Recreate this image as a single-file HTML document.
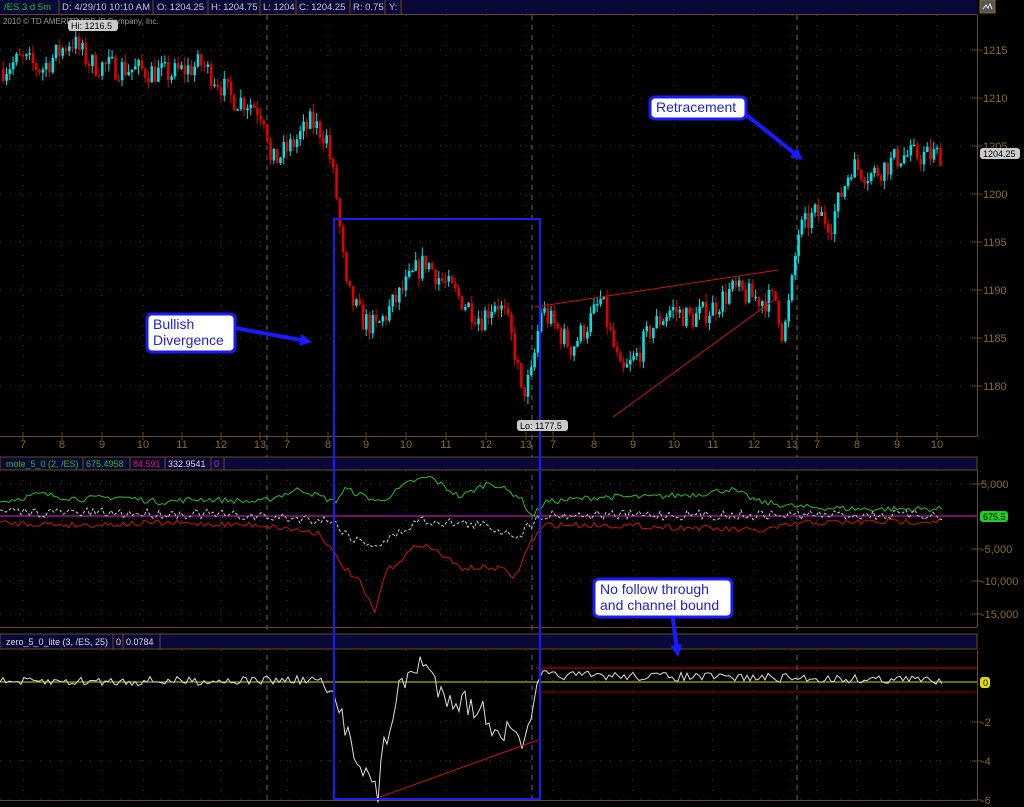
<!DOCTYPE html>
<html><head><meta charset="utf-8"><style>
html,body{margin:0;padding:0;background:#000;width:1024px;height:807px;overflow:hidden;font-family:"Liberation Sans",sans-serif}
svg{display:block}
</style></head><body>
<svg id="s" width="1024" height="807" xmlns="http://www.w3.org/2000/svg" font-family="Liberation Sans, sans-serif">
<rect width="1024" height="807" fill="#000"/>
<rect x="0" y="0" width="977" height="14" fill="#0a0838"/>
<line x1="0" y1="14.5" x2="977" y2="14.5" stroke="#6b4a1a"/>
<g font-size="9.5" fill="#c8c8c8">
<text x="4" y="10" fill="#20c020">/ES 3 d 5m</text>
<line x1="59" y1="0" x2="59" y2="14" stroke="#6b4a1a"/>
<text x="62" y="10" textLength="88">D: 4/29/10 10:10 AM</text>
<line x1="153" y1="0" x2="153" y2="14" stroke="#6b4a1a"/>
<text x="157" y="10">O: 1204.25</text>
<line x1="208" y1="0" x2="208" y2="14" stroke="#6b4a1a"/>
<text x="211" y="10">H: 1204.75</text>
<line x1="260" y1="0" x2="260" y2="14" stroke="#6b4a1a"/>
<text x="263" y="10">L: 1204</text>
<line x1="296" y1="0" x2="296" y2="14" stroke="#6b4a1a"/>
<text x="299" y="10">C: 1204.25</text>
<line x1="350" y1="0" x2="350" y2="14" stroke="#6b4a1a"/>
<text x="353" y="10">R: 0.75</text>
<line x1="385" y1="0" x2="385" y2="14" stroke="#6b4a1a"/>
<text x="389" y="10">Y:</text>
<line x1="401" y1="0" x2="401" y2="14" stroke="#6b4a1a"/>
</g>
<rect x="980" y="0" width="15" height="13" fill="#555" stroke="#8a6a30"/>
<path d="M983 9 L986 5 L988 8 L990 4 L992 9" stroke="#eee" fill="none"/>
<text x="3" y="24" font-size="8" fill="#999">2010 © TD AMERITRADE IP Company, Inc.</text>
<g id="grid"></g>
<g id="draw"></g>
</svg>
<script>
var NS="http://www.w3.org/2000/svg",g=document.getElementById('draw'),gr=document.getElementById('grid');
function el(p,tag,a,t){var e=document.createElementNS(NS,tag);for(var k in a)e.setAttribute(k,a[k]);if(t!=null)e.textContent=t;p.appendChild(e);return e}
var BR="#6b4a1a",TX="#8a6a30";
el(gr,'line',{x1:977.5,y1:15,x2:977.5,y2:436,stroke:BR});
el(gr,'line',{x1:0,y1:436.5,x2:977,y2:436.5,stroke:BR});
var py=function(p){return 50+(1215-p)*9.6};
[1215,1210,1205,1200,1195,1190,1185,1180].forEach(function(p){var y=py(p);
el(gr,'line',{x1:0,y1:y,x2:977,y2:y,stroke:"#5a3e14","stroke-dasharray":"1,9"});
el(gr,'line',{x1:972,y1:y,x2:982,y2:y,stroke:BR});
el(gr,'text',{x:983,y:y+4,"font-size":11,fill:TX},p)});
var xs=[[23,7],[62,8],[102,9],[143,10],[182,11],[221,12],[260,13],[287,7],[328,8],[366,9],[406,10],[446,11],[486,12],[526,13],[553,7],[594,8],[633,9],[674,10],[713,11],[754,12],[792,13],[817,7],[857,8],[897,9],[937,10]];
xs.forEach(function(a){el(gr,'line',{x1:a[0],y1:15,x2:a[0],y2:436,stroke:"#5a3e14","stroke-dasharray":"1,9"});
el(gr,'line',{x1:a[0],y1:432,x2:a[0],y2:440,stroke:BR});
el(gr,'text',{x:a[0],y:448,"font-size":11,fill:TX,"text-anchor":"middle"},a[1]);
[[470,627],[650,800]].forEach(function(r){el(gr,'line',{x1:a[0],y1:r[0],x2:a[0],y2:r[1],stroke:"#5a3e14","stroke-dasharray":"1,9"})})});
[267,532,797].forEach(function(x){el(gr,'line',{x1:x,y1:15,x2:x,y2:800,stroke:"#666","stroke-dasharray":"5,5"})});
el(gr,'rect',{x:0,y:457,width:977,height:13,fill:"#0a0838",stroke:BR});
el(gr,'text',{x:6,y:467,"font-size":9,fill:"#20c020"},"mole_5_0 (2, /ES)");
el(gr,'line',{x1:83,y1:457,x2:83,y2:470,stroke:BR});
el(gr,'text',{x:86,y:467,"font-size":9,fill:"#20c020"},"675.4958");
el(gr,'line',{x1:130,y1:457,x2:130,y2:470,stroke:BR});
el(gr,'text',{x:133,y:467,"font-size":9,fill:"#e02020"},"84.591");
el(gr,'line',{x1:165,y1:457,x2:165,y2:470,stroke:BR});
el(gr,'text',{x:168,y:467,"font-size":9,fill:"#ddd"},"332.9541");
el(gr,'line',{x1:211,y1:457,x2:211,y2:470,stroke:BR});
el(gr,'text',{x:214,y:467,"font-size":9,fill:"#e020e0"},"0");
el(gr,'line',{x1:224,y1:457,x2:224,y2:470,stroke:BR});
el(gr,'rect',{x:0,y:634,width:977,height:15,fill:"#0a0838",stroke:BR});
el(gr,'text',{x:6,y:645,"font-size":9,fill:"#ddd"},"zero_5_0_lite (3, /ES, 25)");
el(gr,'line',{x1:113,y1:634,x2:113,y2:649,stroke:BR});
el(gr,'text',{x:116,y:645,"font-size":9,fill:"#ddd"},"0");
el(gr,'line',{x1:123,y1:634,x2:123,y2:649,stroke:BR});
el(gr,'text',{x:126,y:645,"font-size":9,fill:"#ddd"},"0.0784");
el(gr,'line',{x1:160,y1:634,x2:160,y2:649,stroke:BR});
el(gr,'line',{x1:977.5,y1:470,x2:977.5,y2:627,stroke:BR});
el(gr,'line',{x1:0,y1:627.5,x2:977,y2:627.5,stroke:BR});
el(gr,'line',{x1:977.5,y1:650,x2:977.5,y2:800,stroke:BR});
el(gr,'line',{x1:0,y1:800.5,x2:977,y2:800.5,stroke:BR});
[[484,"5,000"],[549,"-5,000"],[581,"-10,000"],[614,"-15,000"],[722,"-2"],[761,"-4"],[800,"-6"]].forEach(function(a){
el(gr,'line',{x1:0,y1:a[0],x2:977,y2:a[0],stroke:"#5a3e14","stroke-dasharray":"1,9"});
el(gr,'line',{x1:972,y1:a[0],x2:982,y2:a[0],stroke:BR});
el(gr,'text',{x:981,y:a[0]+4,"font-size":11,fill:TX},a[1])});
var seed=7;function rnd(){seed=(seed*16807)%2147483647;return seed/2147483647}
function interp(k,x){for(var i=0;i<k.length-1;i++){if(x<=k[i+1][0]){var t=(x-k[i][0])/(k[i+1][0]-k[i][0]);return k[i][1]+t*(k[i+1][1]-k[i][1])}}return k[k.length-1][1]}
var K=[[0,1213],[20,1214],[40,1213],[60,1215],[70,1216],[90,1213.5],[130,1213],[170,1212.5],[200,1213.5],[215,1212],[230,1210],[250,1209.5],[265,1208],[268,1203],[290,1205],[310,1207.5],[325,1206],[335,1200],[345,1190],[360,1187],[375,1186],[395,1189],[415,1192],[425,1193],[440,1191],[460,1189],[480,1187],[495,1189],[505,1187],[515,1183],[520,1179],[530,1181],[540,1188],[555,1186],[570,1184],[590,1187],[600,1189],[610,1185],[620,1181],[635,1183],[650,1186],[670,1188],[690,1187],[710,1188],[730,1190],[760,1189],[775,1189],[782,1185],[790,1190],[797,1196],[815,1198],[830,1197],[850,1203],[870,1202],[900,1204],[930,1204],[942,1204.25]];
var prev=1213;
for(var x=2;x<=942;x+=3.3){var c=interp(K,x)+(rnd()-0.5)*2.6;var o=prev;var hi=Math.max(o,c)+rnd()*0.9,lo=Math.min(o,c)-rnd()*0.9;
var col=c>=o?"#00e0e0":"#e00000";
el(g,'line',{x1:x+1.2,y1:py(hi),x2:x+1.2,y2:py(lo),stroke:col,"stroke-width":1});
var y1=py(Math.max(o,c)),h=Math.max(1.5,Math.abs(o-c)*9.6);
el(g,'rect',{x:x,y:y1,width:2.6,height:h,fill:col});prev=c}
el(g,'line',{x1:0,y1:516,x2:977,y2:516,stroke:"#e020e0"});
function series(fn,color,extra){var d="";for(var x=0;x<=942;x+=3){d+=(x?"L":"M")+x+" "+fn(x).toFixed(1)}var a={d:d,stroke:color,fill:"none","stroke-width":1};for(var k in extra)a[k]=extra[k];el(g,'path',a)}
var GK=[[0,505],[40,497],[80,502],[120,500],[160,505],[200,502],[260,505],[300,492],[335,505],[345,492],[380,505],[410,485],[430,480],[460,500],[490,485],[520,500],[532,520],[545,505],[600,500],[650,500],[700,497],[730,492],[760,505],[800,510],[860,512],[942,512]];
series(function(x){return interp(GK,x)-rnd()*6},"#20c020");
var RK=[[0,520],[80,522],[160,520],[260,522],[320,530],[340,560],[360,580],[375,610],[385,570],[420,540],[440,550],[460,565],[500,565],[515,575],[530,540],[545,522],[600,522],[700,525],[760,528],[800,520],[942,518]];
series(function(x){return interp(RK,x)+rnd()*6},"#d01010");
var WK=[[0,512],[200,514],[330,520],[355,540],[380,545],[420,520],[480,525],[520,535],[540,515],[942,515]];
series(function(x){return interp(WK,x)+(rnd()-0.5)*10},"#ccc",{"stroke-dasharray":"3,2"});
el(g,'line',{x1:0,y1:682,x2:977,y2:682,stroke:"#d8d800"});
el(g,'line',{x1:536,y1:668,x2:977,y2:668,stroke:"#e00000"});
el(g,'line',{x1:536,y1:692,x2:977,y2:692,stroke:"#a00000"});
var ZK=[[0,682],[320,680],[333,700],[345,725],[360,760],[370,780],[378,795],[385,740],[400,690],[420,660],[440,690],[460,700],[480,710],[500,730],[520,740],[530,735],[540,675],[942,680]];
series(function(x){return interp(ZK,x)+(rnd()-0.5)*(x>330&&x<540?28:9)},"#ddd");
el(g,'line',{x1:535,y1:307,x2:778,y2:270,stroke:"#d01010"});
el(g,'line',{x1:613,y1:417,x2:778,y2:297,stroke:"#d01010"});
el(g,'line',{x1:380,y1:797,x2:538,y2:740,stroke:"#d01010"});
el(g,'rect',{x:334,y:219,width:206,height:580,fill:"none",stroke:"#1a1aff","stroke-width":2});
function bub(x,y,w,t,fill,tc){el(g,'rect',{x:x,y:y,width:w,height:11,rx:3,fill:fill});el(g,'text',{x:x+3,y:y+9,"font-size":9,fill:tc||"#000"},t)}
bub(68,20,50,"Hi: 1216.5","#ccc");
bub(517,420,51,"Lo: 1177.5","#ccc");
bub(980,148,40,"1204.25","#ccc");
bub(980,511,28,"675.5","#20d020");
bub(980,677,10,"0","#e0e000");
function note(x,y,w,h,lines){el(g,'rect',{x:x,y:y,width:w,height:h,rx:5,fill:"#fff",stroke:"#1a1aff","stroke-width":3});
lines.forEach(function(t,i){el(g,'text',{x:x+6,y:y+15+i*16,"font-size":14,fill:"#2020e0"},t)})}
function arrow(x1,y1,x2,y2){var a=Math.atan2(y2-y1,x2-x1),L=12,W=6;
el(g,'line',{x1:x1,y1:y1,x2:x2-Math.cos(a)*8,y2:y2-Math.sin(a)*8,stroke:"#1a1aff","stroke-width":4});
var bx=x2-Math.cos(a)*L,by=y2-Math.sin(a)*L,px=-Math.sin(a)*W,pyy=Math.cos(a)*W;
el(g,'path',{d:"M"+x2+" "+y2+"L"+(bx+px)+" "+(by+pyy)+"L"+(bx-px)+" "+(by-pyy)+"Z",fill:"#1a1aff"})}
arrow(235,328,312,342);note(147,314,88,38,["Bullish","Divergence"]);
arrow(740,110,803,160);note(650,97,96,22,["Retracement"]);
arrow(672,612,678,657);note(594,579,138,38,["No follow through","and channel bound"]);
</script>
</body></html>
